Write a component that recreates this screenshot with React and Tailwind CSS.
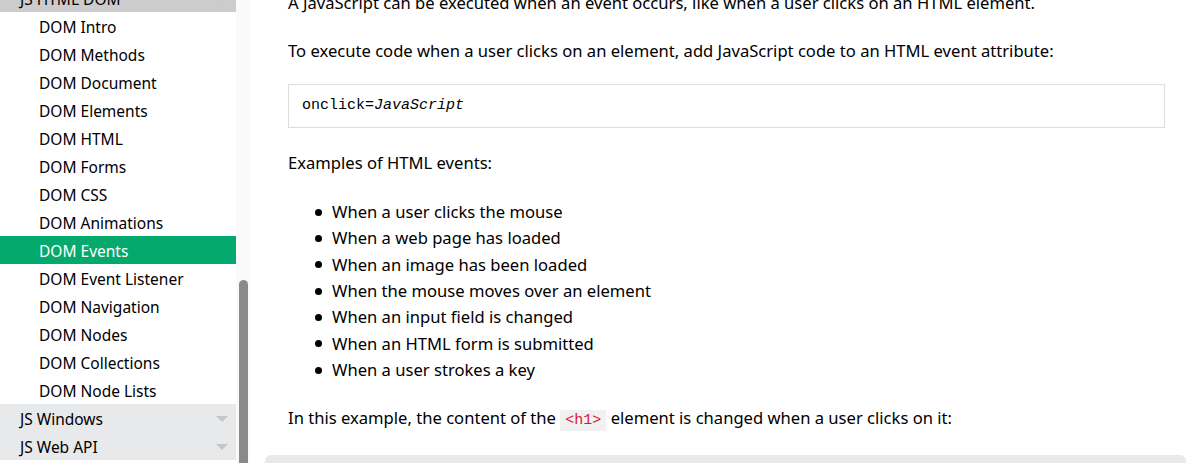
import React from "react";

const Tri = () => (
  <svg width="12" height="7" viewBox="0 0 12 7" className="shrink-0">
    <path d="M0 0 L12 0 L6 6 Z" fill="#c4c6c8" />
  </svg>
);

const domItems = [
  "DOM Intro",
  "DOM Methods",
  "DOM Document",
  "DOM Elements",
  "DOM HTML",
  "DOM Forms",
  "DOM CSS",
  "DOM Animations",
  "DOM Events",
  "DOM Event Listener",
  "DOM Navigation",
  "DOM Nodes",
  "DOM Collections",
  "DOM Node Lists",
];

const bullets = [
  "When a user clicks the mouse",
  "When a web page has loaded",
  "When an image has been loaded",
  "When the mouse moves over an element",
  "When an input field is changed",
  "When an HTML form is submitted",
  "When a user strokes a key",
];

export default function App() {
  const font = { fontFamily: '"Noto Sans", "Open Sans", sans-serif' };
  return (
    <div className="w-[1200px] h-[463px] overflow-hidden bg-white flex items-start text-black" style={font}>
      {/* Sidebar */}
      <div className="w-[236px] shrink-0 flex flex-col -mt-[16px] text-[15.5px]">
        <div className="h-[28px] shrink-0 bg-[#cccccc] flex items-center justify-between pl-[20px] pr-[8px] pt-[3px]">
          <span>JS HTML DOM</span>
          <Tri />
        </div>
        {domItems.map((t) => (
          <div
            key={t}
            className={
              t === "DOM Events"
                ? "h-[28px] shrink-0 flex items-center pl-[39px] pt-[3px] bg-[#04AA6D] text-white"
                : "h-[28px] shrink-0 flex items-center pl-[39px] pt-[3px]"
            }
          >
            {t}
          </div>
        ))}
        <div className="h-[28px] shrink-0 bg-[#E7E9EB] flex items-center justify-between pl-[20px] pr-[8px] pt-[3px]">
          <span>JS Windows</span>
          <Tri />
        </div>
        <div className="h-[28px] shrink-0 bg-[#E7E9EB] flex items-center justify-between pl-[20px] pr-[8px] pt-[3px]">
          <span>JS Web API</span>
          <Tri />
        </div>
      </div>
      {/* Scrollbar */}
      <div className="w-[14px] h-[463px] shrink-0 bg-[#fafafa] flex flex-col items-center pt-[280px]">
        <div className="w-[9px] flex-1 bg-[#8a8a8a] rounded-t-full ml-[1px]" />
      </div>
      {/* Main */}
      <div className="flex-1 flex flex-col pl-[38px] pr-[35px] text-[16.6px] leading-[26.4px]">
        <p className="-mt-[10px] shrink-0 whitespace-nowrap">
          A JavaScript can be executed when an event occurs, like when a user clicks on an HTML element.
        </p>
        <p className="mt-[21.6px] shrink-0 whitespace-nowrap">
          To execute code when a user clicks on an element, add JavaScript code to an HTML event attribute:
        </p>
        <div
          className="mt-[19.8px] h-[44px] shrink-0 border border-[#dddddd] bg-white flex items-center pl-[13px] text-[15px]"
          style={{ fontFamily: '"Liberation Mono", monospace' }}
        >
          <span>
            onclick=<i>JavaScript</i>
          </span>
        </div>
        <p className="mt-[21.8px] shrink-0">Examples of HTML events:</p>
        <ul className="mt-[22.6px] shrink-0 flex flex-col pl-[27px]">
          {bullets.map((b) => (
            <li key={b} className="flex items-center h-[26.33px] shrink-0">
              <span className="w-[7px] h-[7px] rounded-full bg-black mr-[10px] shrink-0" />
              {b}
            </li>
          ))}
        </ul>
        <p className="mt-[21.6px] shrink-0 whitespace-nowrap">
          In this example, the content of the{" "}
          <code
            className="text-[15px] text-[#dc143c] bg-[#f1f1f1] px-[5px] py-[2px]"
            style={{ fontFamily: '"Liberation Mono", monospace' }}
          >
            &lt;h1&gt;
          </code>{" "}
          element is changed when a user clicks on it:
        </p>
        <div className="mt-[21px] -ml-[23px] -mr-[21px] h-[60px] bg-[#E7E9EB] rounded-[6px] shrink-0" />
      </div>
    </div>
  );
}
